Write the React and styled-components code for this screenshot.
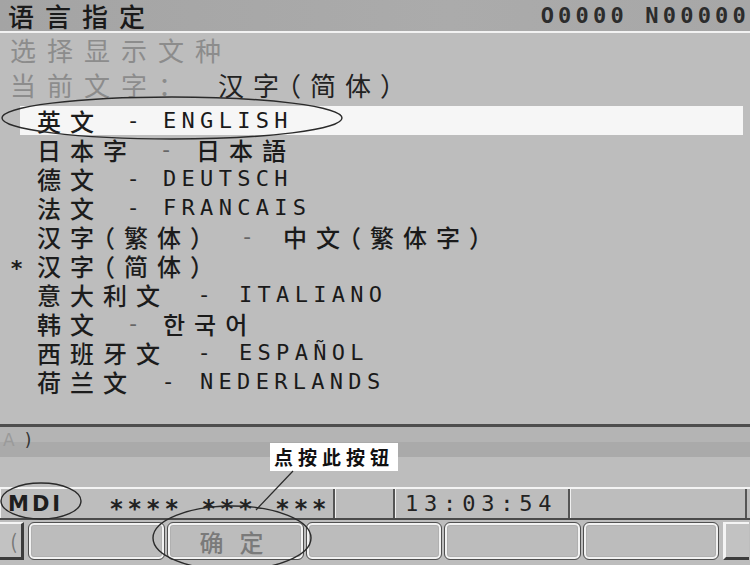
import React from 'react'
import styled, { createGlobalStyle } from 'styled-components'

const cjk = `"Noto Sans CJK SC", "Noto Sans CJK KR", "Noto Sans CJK JP", sans-serif`;
const mono = `"DejaVu Sans Mono", "Liberation Mono", monospace`;

const GlobalStyle = createGlobalStyle`
    html, body {
        margin: 0;
        padding: 0;
        background: #bdbdbd;
    }
`;

const Screen = styled.div`
    position: relative;
    width: 750px;
    height: 565px;
    overflow: hidden;
    display: flex;
    flex-direction: column;
    background: #bdbdbd;
    font-family: ${cjk};
    color: #1c1c1c;
`;

const TitleBar = styled.header`
    height: 31px;
    display: flex;
    align-items: center;
    justify-content: space-between;
    padding-left: 8px;
    background: linear-gradient(to right, #a4a4a4, #ababab 60%, #a7a7a7);
    border-bottom: 2px solid #f2f2f2;
`;

const Title = styled.h1`
    margin: 0;
    font-size: 26px;
    font-weight: 500;
    line-height: 31px;
    letter-spacing: 11px;
    color: #1a1a1a;
`;

const Prog = styled.span`
    font-family: ${mono};
    font-size: 22px;
    font-weight: bold;
    line-height: 31px;
    letter-spacing: 4.2px;
    color: #2c2c2c;
`;

const Body = styled.main`
    height: 391px;
    display: flex;
    flex-direction: column;
`;

const Prompt = styled.div`
    height: 33px;
    line-height: 33px;
    padding-left: 10px;
    font-size: 26px;
    letter-spacing: 11px;
    color: #8c8c8c;
`;

const Current = styled.div`
    height: 37px;
    line-height: 37px;
    display: flex;
    align-items: center;
    padding-left: 10px;
    font-size: 26px;
`;

const CurrentLabel = styled.span`
    letter-spacing: 11px;
    color: #8c8c8c;
`;

const CurrentValue = styled.span`
    margin-left: 23px;
    letter-spacing: 9px;
    font-feature-settings: "halt";
    color: #222;
`;

const List = styled.ul`
    list-style: none;
    margin: 3px 0 0;
    padding: 0;
`;

const Row = styled.li`
    height: 29px;
    line-height: 29px;
    display: flex;
    align-items: center;
    white-space: pre;
    background: ${p => p.$selected
        ? 'linear-gradient(to right, transparent 20px, #f6f6f6 20px, #f6f6f6 743px, transparent 743px)'
        : 'transparent'};
`;

const Mark = styled.span`
    width: 37px;
    box-sizing: border-box;
    padding-left: 10px;
    font-family: ${mono};
    font-size: 22px;
    font-weight: bold;
    position: relative;
    top: 3px;
`;

const Cn = styled.span`
    font-size: 24px;
    font-weight: 500;
    letter-spacing: 9px;
    font-feature-settings: "halt";
`;

const Dash = styled.span`
    width: ${p => p.$w}px;
    text-align: center;
    font-family: ${mono};
    font-size: 22px;
    color: ${p => p.$soft ? '#666' : '#1c1c1c'};
`;

const Native = styled.span`
    font-family: ${p => p.$latin ? mono : cjk};
    font-size: ${p => p.$latin ? '22px' : '24px'};
    font-weight: ${p => p.$latin ? 'normal' : 500};
    letter-spacing: ${p => p.$latin ? '5.3px' : '9px'};
    font-feature-settings: "halt";
    color: #1a1a1a;
`;

const Divider = styled.div`
    height: 3px;
    background: #4e4e4e;
`;

const InputLine = styled.div`
    height: 30px;
    padding-left: 3px;
    display: flex;
    align-items: flex-start;
    background: linear-gradient(#b4b4b4 0, #b4b4b4 50%, #aaaaaa 50%, #aaaaaa 100%);
    font-family: "DejaVu Sans", sans-serif;
    font-size: 17px;
    line-height: 26px;
`;

const Dim = styled.span`
    color: ${p => p.$dark ? '#333' : '#9a9a9a'};
    margin-right: 10px;
`;

const Blank = styled.div`
    height: 30px;
`;

const StatusBar = styled.div`
    height: 29px;
    display: flex;
    border-top: 2px solid #f4f4f4;
    border-bottom: 2px solid #4a4a4a;
`;

const Cell = styled.div`
    width: ${p => p.$w}px;
    box-sizing: border-box;
    display: flex;
    align-items: center;
    padding-left: ${p => p.$pad || 0}px;
    border-right: 2px solid #555;
    box-shadow: inset 1px 0 0 #f0f0f0;
    font-family: ${mono};
    font-size: 22px;
    white-space: pre;
`;

const Mode = styled.span`
    font-family: "DejaVu Sans", sans-serif;
    font-weight: bold;
    font-size: 21px;
    letter-spacing: 3px;
    color: #1e1e1e;
`;

const Stars = styled.span`
    margin-left: 46px;
    font-weight: bold;
    font-size: 24px;
    letter-spacing: 4px;
    position: relative;
    top: 5px;
    color: #222;
`;

const Clock = styled.span`
    letter-spacing: 5.8px;
    color: #222;
`;

const SoftKeys = styled.nav`
    height: 45px;
    display: flex;
    align-items: flex-start;
    padding-top: 2px;
    box-sizing: border-box;
    gap: 2px;
`;

const EdgeKey = styled.div`
    width: ${p => p.$w}px;
    height: 38px;
    box-sizing: border-box;
    margin: ${p => p.$right ? '0 0 0 2px' : '0 2px 0 0'};
    background: #c2c2c2;
    border-top: 2px solid #f4f4f4;
    border-left: ${p => p.$right ? '3px solid #f4f4f4' : 'none'};
    border-right: ${p => p.$right ? 'none' : '3px solid #3c3c3c'};
    border-bottom: 3px solid #3c3c3c;
    display: flex;
    align-items: center;
    justify-content: flex-end;
    padding-right: 4px;
    font-size: 20px;
    color: #777;
`;

const SoftKey = styled.button`
    width: ${p => p.$w || 137}px;
    height: 38px;
    padding: 0;
    border: 1px solid #505050;
    border-radius: 6px;
    background: #bcbcbc;
    box-shadow: inset 0 0 0 2px #f2f2f2, inset 0 0 0 3px #b0b0b0;
    font-family: ${cjk};
    font-size: 24px;
    font-weight: 500;
    letter-spacing: 16px;
    color: #7a7a7a;
    text-indent: 8px;
`;

const Callout = styled.div`
    position: absolute;
    left: 270px;
    top: 443px;
    width: 128px;
    height: 28px;
    padding-left: 4px;
    box-sizing: border-box;
    background: #fff;
    font-size: 19px;
    font-weight: bold;
    line-height: 28px;
    letter-spacing: 5px;
    color: #111;
`;

const Marks = styled.svg`
    position: absolute;
    left: 0;
    top: 0;
    pointer-events: none;
`;

const languages = [
    { cn: '英文', native: 'ENGLISH', latin: true, selected: true },
    { cn: '日本字', native: '日本語', soft: true },
    { cn: '德文', native: 'DEUTSCH', latin: true },
    { cn: '法文', native: 'FRANCAIS', latin: true },
    { cn: '汉字（繁体）', native: '中文（繁体字）', soft: true, gap: 72 },
    { cn: '汉字（简体）', current: true },
    { cn: '意大利文', native: 'ITALIANO', latin: true, gap: 70 },
    { cn: '韩文', native: '한국어', soft: true },
    { cn: '西班牙文', native: 'ESPAÑOL', latin: true, gap: 70 },
    { cn: '荷兰文', native: 'NEDERLANDS', latin: true, gap: 64 },
];

const App = () => {
    return (
        <Screen>
            <GlobalStyle />
            <TitleBar>
                <Title>语言指定</Title>
                <Prog>O0000 N00000</Prog>
            </TitleBar>
            <Body>
                <Prompt>选择显示文种</Prompt>
                <Current>
                    <CurrentLabel>当前文字：</CurrentLabel>
                    <CurrentValue>汉字（简体）</CurrentValue>
                </Current>
                <List>
                    {languages.map((lang, index) => (
                        <Row key={index} $selected={lang.selected}>
                            <Mark>{lang.current ? '*' : ''}</Mark>
                            <Cn>{lang.cn}</Cn>
                            {lang.native && <Dash $w={lang.gap || 60} $soft={lang.soft}>-</Dash>}
                            {lang.native && <Native $latin={lang.latin}>{lang.native}</Native>}
                        </Row>
                    ))}
                </List>
            </Body>
            <Divider />
            <InputLine>
                <Dim>A</Dim><Dim $dark>)</Dim>
            </InputLine>
            <Blank />
            <StatusBar>
                <Cell $w={335} $pad={8}>
                    <Mode>MDI</Mode>
                    <Stars>**** *** ***</Stars>
                </Cell>
                <Cell $w={60} />
                <Cell $w={175} $pad={10}>
                    <Clock>13:03:54</Clock>
                </Cell>
                <Cell $w={177} />
            </StatusBar>
            <SoftKeys>
                <EdgeKey $w={24}>(</EdgeKey>
                <SoftKey />
                <SoftKey>确定</SoftKey>
                <SoftKey $w={136} />
                <SoftKey />
                <SoftKey $w={136} />
                <EdgeKey $w={26} $right />
            </SoftKeys>

            <Callout>点按此按钮</Callout>
            <Marks width="750" height="565" viewBox="0 0 750 565">
                <g fill="none" stroke="#2a2a2a" strokeWidth="1.4">
                    <ellipse cx="172" cy="118" rx="170" ry="21" />
                    <ellipse cx="41" cy="501" rx="40" ry="18" />
                    <ellipse cx="232" cy="538" rx="79" ry="32" />
                    <line x1="293" y1="471" x2="256" y2="510" strokeWidth="1.2" />
                </g>
            </Marks>
        </Screen>
    )
}

export default App
